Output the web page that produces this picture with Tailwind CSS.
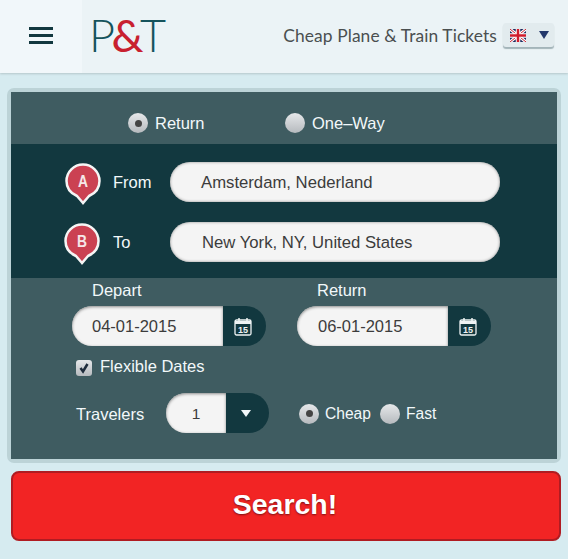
<!DOCTYPE html>
<html lang="en">

<head>
  <meta charset="UTF-8">
  <meta name="viewport" content="width=device-width, initial-scale=1.0">
  <title>P&amp;T - Cheap Plane &amp; Train Tickets</title>
  <script src="https://cdn.jsdelivr.net/npm/@tailwindcss/browser@4"></script>
</head>

<body class="h-[559px] w-[568px] overflow-hidden bg-[#d6ebf0] font-['Liberation_Sans',Arial,sans-serif]">

  <!-- Header -->
  <header class="flex h-[73px] bg-[#ebf3f6] shadow-[0_1px_2px_#b5c6ca]">
    <div class="flex w-[82px] items-center justify-center bg-[#f1f7fa] pb-[2px]">
      <div class="flex w-[24px] flex-col gap-[4px]">
        <span class="h-[3px] bg-[#12383f]"></span>
        <span class="h-[3px] bg-[#12383f]"></span>
        <span class="h-[3px] bg-[#12383f]"></span>
      </div>
    </div>
    <div class="ml-[7px] flex items-center pb-[2px] font-['Lato',sans-serif] text-[45px] leading-none font-light tracking-[-3.5px] text-[#15535c]">
      P<span class="font-normal text-[#c8202f]">&amp;</span>T
    </div>
    <div class="ml-auto flex items-center pr-[14px] pb-[1px]">
      <span class="font-['Lato',sans-serif] text-[17.4px] tracking-[0.1px] text-[#4a4f50]">Cheap Plane &amp; Train Tickets</span>
      <div class="mb-[2px] ml-[6px] flex h-[24px] w-[51px] items-center justify-between rounded-[3px] bg-[#e2ebee] pr-[5px] pl-[7px] shadow-[0_2px_1px_#a3b4b9]">
        <svg width="16" height="13" viewBox="0 0 16 13">
          <rect width="16" height="13" fill="#1c2a5e" />
          <path d="M0 0L16 13M16 0L0 13" stroke="#fff" stroke-width="3" />
          <path d="M0 0L16 13M16 0L0 13" stroke="#c8202f" stroke-width="1" />
          <path d="M8 0V13M0 6.500H16" stroke="#fff" stroke-width="4.500" />
          <path d="M8 0V13M0 6.500H16" stroke="#d01c2c" stroke-width="2.500" />
        </svg>
        <span class="h-0 w-0 border-x-[5px] border-t-[8px] border-x-transparent border-t-[#23386b]"></span>
      </div>
    </div>
  </header>

  <!-- Search form -->
  <main class="mx-[7px] mt-[15px] rounded-[7px] bg-[#bcd3d7] p-[4px]">
    <section class="flex h-[52px] items-center bg-[#3f5c61] pt-[10px] pl-[117px] text-[16.5px] text-[#f2f8fa]">
      <label class="flex w-[157px] items-center gap-[7px]">
        <span class="flex h-[20px] w-[20px] items-center justify-center rounded-full bg-linear-to-b from-[#e6e8ea] to-[#b6babe]"><span class="h-[7px] w-[7px] rounded-full bg-[#444]"></span></span>
        Return
      </label>
      <label class="flex items-center gap-[7px]">
        <span class="h-[20px] w-[20px] rounded-full bg-linear-to-b from-[#e6e8ea] to-[#b6babe]"></span>
        One–Way
      </label>
    </section>

    <section class="flex h-[134px] flex-col gap-[20px] bg-[#12383f] pt-[18px] pl-[54px] text-[16.5px] text-[#f2f8fa]">
      <div class="flex h-[40px] items-center">
        <svg class="mt-[3px]" width="36" height="42" viewBox="0 0 36 42">
          <path d="M18 40L12 33C5 30 1.500 25 1.500 18A16.500 16.500 0 0 1 34.500 18C34.500 25 31 30 24 33Z" fill="#cb4152" stroke="#f5f5f5" stroke-width="2.500" />
          <text x="18" y="24" text-anchor="middle" textLength="10" lengthAdjust="spacingAndGlyphs" font-family="Liberation Sans" font-size="17" font-weight="700" fill="#f5e6e8">A</text>
        </svg>
        <span class="mt-[1px] ml-[12px] w-[57px]">From</span>
        <div class="flex h-[40px] w-[330px] items-center rounded-full bg-[#f4f4f4] pt-[1px] pl-[31px] text-[16.7px] text-[#3c3c3c] shadow-[inset_0_0_3px_#8b8b8b]">Amsterdam, Nederland</div>
      </div>
      <div class="flex h-[40px] items-center">
        <svg class="-ml-[1px] mt-[3px]" width="36" height="42" viewBox="0 0 36 42">
          <path d="M18 40L12 33C5 30 1.500 25 1.500 18A16.500 16.500 0 0 1 34.500 18C34.500 25 31 30 24 33Z" fill="#cb4152" stroke="#f5f5f5" stroke-width="2.500" />
          <text x="18" y="24" text-anchor="middle" textLength="10" lengthAdjust="spacingAndGlyphs" font-family="Liberation Sans" font-size="17" font-weight="700" fill="#f5e6e8">B</text>
        </svg>
        <span class="mt-[1px] ml-[13px] w-[57px]">To</span>
        <div class="flex h-[40px] w-[330px] items-center rounded-full bg-[#f4f4f4] pt-[1px] pl-[32px] text-[16.7px] text-[#3c3c3c] shadow-[inset_0_0_3px_#8b8b8b]">New York, NY, United States</div>
      </div>
    </section>

    <section class="h-[181px] bg-[#3f5c61] text-[16.5px] text-[#f2f8fa]">
      <div class="flex pl-[61px]">
        <div class="w-[225px]">
          <div class="h-[28px] pt-[2px] pl-[20px] leading-[20px]">Depart</div>
          <div class="flex h-[40px] w-[194px]">
            <div class="flex w-[151px] items-center rounded-l-full bg-[#f4f4f4] pt-[1px] pl-[20px] text-[#3c3c3c] shadow-[inset_0_1px_3px_#8b8b8b]">04-01-2015</div>
            <div class="flex flex-1 items-center justify-center rounded-r-full bg-[#12383f] pr-[4px]">
              <svg width="18" height="19" viewBox="0 0 18 19" fill="none" stroke="#eef3f4">
                <rect x="1" y="3" width="16" height="15" rx="1.500" stroke-width="1.300" />
                <path d="M1 5.500H17" stroke-width="3" />
                <path d="M5 1V4M13 1V4" stroke-width="1.500" />
                <text x="9" y="16" text-anchor="middle" font-family="Liberation Sans" font-size="9" font-weight="700" fill="#eef3f4" stroke="none">15</text>
              </svg>
            </div>
          </div>
        </div>
        <div>
          <div class="h-[28px] pt-[2px] pl-[20px] leading-[20px]">Return</div>
          <div class="flex h-[40px] w-[194px]">
            <div class="flex w-[151px] items-center rounded-l-full bg-[#f4f4f4] pt-[1px] pl-[21px] text-[#3c3c3c] shadow-[inset_0_1px_3px_#8b8b8b]">06-01-2015</div>
            <div class="flex flex-1 items-center justify-center rounded-r-full bg-[#12383f] pr-[4px]">
              <svg width="18" height="19" viewBox="0 0 18 19" fill="none" stroke="#eef3f4">
                <rect x="1" y="3" width="16" height="15" rx="1.500" stroke-width="1.300" />
                <path d="M1 5.500H17" stroke-width="3" />
                <path d="M5 1V4M13 1V4" stroke-width="1.500" />
                <text x="9" y="16" text-anchor="middle" font-family="Liberation Sans" font-size="9" font-weight="700" fill="#eef3f4" stroke="none">15</text>
              </svg>
            </div>
          </div>
        </div>
      </div>

      <label class="mt-[10px] ml-[65px] flex h-[22px] items-center gap-[8px]">
        <span class="mt-[2px] flex h-[16px] w-[16px] items-center justify-center rounded-[3px] bg-linear-to-b from-[#e6e8ea] to-[#b6babe]">
          <svg width="12" height="12" viewBox="0 0 12 12" fill="none"><path d="M2.500 6L5 9.500L9.500 2" stroke="#1e2c3c" stroke-width="2.500" /></svg>
        </span>
        <span class="-mt-[1px]">Flexible Dates</span>
      </label>

      <div class="mt-[15px] flex h-[40px] items-center pl-[65px]">
        <span class="mt-[2px] w-[90px]">Travelers</span>
        <div class="flex h-[40px] w-[103px]">
          <div class="flex w-[60px] items-center justify-center rounded-l-full bg-[#f4f4f4] pt-[1px] text-[15.5px] text-[#3c3c3c] shadow-[inset_0_1px_3px_#8b8b8b]">1</div>
          <div class="flex flex-1 items-center justify-center rounded-r-full bg-[#12383f] pr-[3px]">
            <span class="h-0 w-0 border-x-[5px] border-t-[7px] border-x-transparent border-t-[#f2f8fa]"></span>
          </div>
        </div>
        <div class="mt-[2px] ml-[30px] flex items-center text-[15.6px]">
          <span class="flex h-[20px] w-[20px] items-center justify-center rounded-full bg-linear-to-b from-[#e6e8ea] to-[#b6babe]"><span class="h-[7px] w-[7px] rounded-full bg-[#444]"></span></span>
          <span class="ml-[6px]">Cheap</span>
          <span class="ml-[9px] h-[20px] w-[20px] rounded-full bg-linear-to-b from-[#e6e8ea] to-[#b6babe]"></span>
          <span class="ml-[6px]">Fast</span>
        </div>
      </div>
    </section>
  </main>

  <button class="mx-[11px] mt-[8px] flex h-[70px] w-[550px] items-center justify-center rounded-[8px] border-2 border-[#b01c22] bg-[#f22424] pr-[2px] pb-[4px] text-[28.5px] font-bold text-white [text-shadow:0_1px_2px_#7a1214]">Search!</button>

</body>

</html>
